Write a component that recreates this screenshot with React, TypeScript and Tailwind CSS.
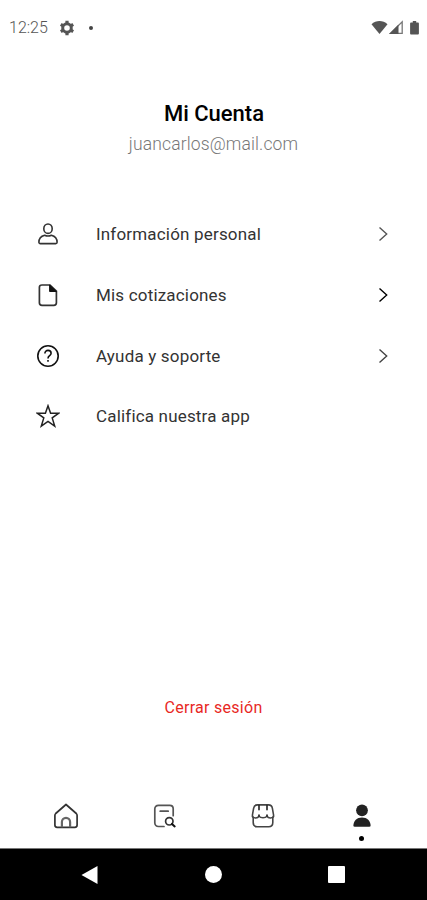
import React from "react";
import clsx from "clsx";

const menuItems = [
  { name: "Información personal", icon: PersonIcon, chevron: "text-[#555]" },
  { name: "Mis cotizaciones", icon: FileIcon, chevron: "text-black" },
  { name: "Ayuda y soporte", icon: HelpIcon, chevron: "text-[#444]" },
  { name: "Califica nuestra app", icon: StarIcon, chevron: null },
];

const tabs = [
  { name: "Inicio", icon: HomeIcon },
  { name: "Cotizaciones", icon: SearchDocIcon },
  { name: "Tienda", icon: StoreIcon },
  { name: "Cuenta", icon: AccountIcon, active: true },
];

function PersonIcon() {
  return (
    <svg width="24" height="24" viewBox="0 0 24 24" fill="none" stroke="#333" strokeWidth="1.6">
      <ellipse cx="12" cy="6.700" rx="4.200" ry="4.700" />
      <path d="M2.900 20.300c0-4 2.700-6.200 5.700-7 2 .9 4.800.9 6.800 0 3 .8 5.700 3 5.700 7 0 .8-.6 1.300-1.400 1.300H4.300c-.8 0-1.400-.5-1.400-1.300z" />
    </svg>
  );
}

function FileIcon() {
  return (
    <svg width="24" height="24" viewBox="0 0 24 24" fill="none" stroke="#333" strokeWidth="1.7">
      <path d="M14 2H6C4.500 2 3.400 2.900 3.400 4.300v15.400c0 1.400 1.100 2.600 2.600 2.600h11.800c1.500 0 2.600-1.200 2.600-2.600V8z" />
      <path d="M13.600 2v6.500h6.800z" fill="#111" stroke="#111" strokeWidth="1" />
    </svg>
  );
}

function HelpIcon() {
  return (
    <svg width="24" height="24" viewBox="0 0 24 24" fill="none" stroke="#111" strokeWidth="1.600">
      <circle cx="12" cy="12" r="10.200" />
      <path d="M8.900 9.500c0-1.900 1.300-3.100 3.100-3.100s3.100 1.100 3.100 2.800c0 2.500-3.100 2.500-3.100 5.200" />
      <path d="M12 15.900v1.900" />
    </svg>
  );
}

function StarIcon() {
  return (
    <svg width="24" height="24" viewBox="0 0 24 24" fill="none" stroke="#222" strokeWidth="1.500">
      <path d="M12 1.800l2.600 7.400h8.200l-6.600 4.700 2.500 8.200L12 17.300l-6.700 4.800 2.500-8.200-6.600-4.700h8.200z" />
    </svg>
  );
}

function HomeIcon() {
  return (
    <svg width="26" height="26" viewBox="0 0 26 26" fill="none" stroke="#333" strokeWidth="1.700" strokeLinejoin="round">
      <path d="M13 1.500L2.700 10.500a2.500 2.500 0 0 0-.8 1.900v9.600c0 1.300.9 2.300 2.200 2.300h17.800c1.300 0 2.200-1 2.200-2.300v-9.600c0-.7-.3-1.400-.8-1.900z" />
      <path d="M8.900 24.300v-5.400a4.100 4.100 0 0 1 8.200 0v5.400" strokeWidth="2.200" stroke="#666" />
    </svg>
  );
}

function SearchDocIcon() {
  return (
    <svg width="26" height="26" viewBox="0 0 26 26" fill="none" stroke="#555" strokeWidth="1.700" strokeLinecap="round">
      <path d="M12 23.500H6.500c-2.200 0-3.700-1.400-3.700-3.700V5.900c0-2.200 1.400-3.600 3.700-3.600h11.300c2.200 0 3.400 1.200 3.400 3.400v7" />
      <path d="M8.200 8.200h8" />
      <circle cx="17.300" cy="18.300" r="3.700" stroke="#333" />
      <path d="M20 20.900l2.700 2.500" stroke="#111" strokeWidth="2" />
    </svg>
  );
}

function StoreIcon() {
  return (
    <svg width="26" height="26" viewBox="0 0 26 26" fill="none" stroke="#444" strokeWidth="1.600" strokeLinecap="round">
      <path d="M7.500 1.900h11c2.200 0 3.500 1.200 3.900 3.400l1.200 6.900c0 1-.2 1.800-.8 2.400v5c0 2.600-1.500 4.200-4.100 4.200H7.300c-2.600 0-4.100-1.600-4.100-4.200v-5c-.6-.6-.8-1.400-.8-2.400l1.200-6.900c.4-2.200 1.700-3.400 3.900-3.400z" />
      <path d="M2.600 13.700c1.700 1.800 4.900 1.600 6.400-.4 1.800 2 6.200 2 8 0 1.500 2 4.700 2.200 6.400.4" />
      <path d="M9 2.500v4.300M17 2.500v4.300M9 12v1M17 12v1" stroke="#222" />
    </svg>
  );
}

function AccountIcon() {
  return (
    <svg width="26" height="26" viewBox="0 0 26 26" fill="#222">
      <ellipse cx="13" cy="7.300" rx="5.900" ry="5.900" />
      <path d="M4.400 22.600c0-4.800 3.500-8.200 8.600-8.200s8.600 3.400 8.600 8.200c0 .8-.4 1.200-1.100 1.200H5.500c-.7 0-1.100-.4-1.100-1.200z" />
    </svg>
  );
}

function StatusBar() {
  return (
    <div className="flex h-14 items-center justify-between pr-1.5 pl-[9px]">
      <div className="flex items-center">
        <span className="w-[50px] text-[16px] leading-5 font-light text-[#555]">12:25</span>
        <svg width="16" height="16" viewBox="0 0 16 16" fill="none">
          <circle cx="8" cy="8" r="4.300" stroke="#555" strokeWidth="3" />
          <path
            d="M8 .8v2.400M8 12.800v2.400M1.800 4.400l2 1.200M12.200 10.400l2 1.200M14.200 4.400l-2 1.200M3.800 10.400l-2 1.200"
            stroke="#555"
            strokeWidth="3.200"
          />
        </svg>
        <span className="ml-[14px] size-1 rounded-full bg-[#444]" />
      </div>
      <svg width="50" height="16" viewBox="0 0 50 16" fill="#555">
        <path d="M.5 4.200C5-.2 12-.2 16.500 4.200L8.500 14z" />
        <path d="M19.500 13.400L31.200 1.700v11.700z" fill="none" stroke="#777" strokeWidth="1.300" />
        <path d="M18 14L27.500 4.500V14z" />
        <path d="M40 2.500h1.800V1h3.400v1.500H47c.6 0 .9.300.9.900v10c0 .7-.3 1-.9 1h-7c-.6 0-.9-.3-.9-1v-10c0-.6.300-.9.900-.9z" />
      </svg>
    </div>
  );
}

export default function App() {
  return (
    <div className="flex h-[900px] w-[427px] flex-col overflow-hidden bg-white font-[Roboto,sans-serif]">
      <StatusBar />

      <header className="mt-11 flex flex-col items-center">
        <h1 className="pl-px text-[22px] leading-7 font-medium text-black">Mi Cuenta</h1>
        <p className="mt-0.5 text-[17.5px] leading-7 font-light tracking-[0.13px] text-[#777]">juancarlos@mail.com</p>
      </header>

      {/* Account options */}
      <ul className="mt-[46px]">
        {menuItems.map((item) => (
          <li key={item.name} className="flex h-[60.7px] items-center pr-[37px] pl-9">
            <item.icon />
            <span className="ml-9 flex-1 text-[17px] leading-6 tracking-[0.18px] text-[#333]">{item.name}</span>
            {item.chevron && (
              <svg
                width="14"
                height="16"
                viewBox="0 0 14 16"
                fill="none"
                stroke="currentColor"
                strokeWidth="1.400"
                className={clsx("shrink-0", item.chevron)}
              >
                <path d="M3.500 1.400L10.700 8l-7.200 6.600" />
              </svg>
            )}
          </li>
        ))}
      </ul>

      <button className="mt-auto mb-[65px] self-center text-[16px] leading-6 tracking-[0.28px] text-[#e8281f]">
        Cerrar sesión
      </button>

      {/* Bottom tabs */}
      <nav className="flex h-[63px] pr-4 pl-[17px]">
        {tabs.map((tab) => (
          <button key={tab.name} aria-label={tab.name} className="flex flex-1 flex-col items-center pt-[18px]">
            <tab.icon />
            {tab.active && <span className="mt-[7px] size-[5px] rounded-full bg-black" />}
          </button>
        ))}
      </nav>

      {/* System navigation */}
      <div className="flex h-[52px] items-center justify-between border-t border-[#777] bg-black pr-[82px] pl-[80px]">
        <svg width="18" height="20" viewBox="0 0 18 20" fill="#fff">
          <path d="M1.500 10L17.500 1v18z" />
        </svg>
        <span className="ml-px size-[17px] rounded-full bg-white" />
        <span className="size-[17px] rounded-[1px] bg-white" />
      </div>
    </div>
  );
}
